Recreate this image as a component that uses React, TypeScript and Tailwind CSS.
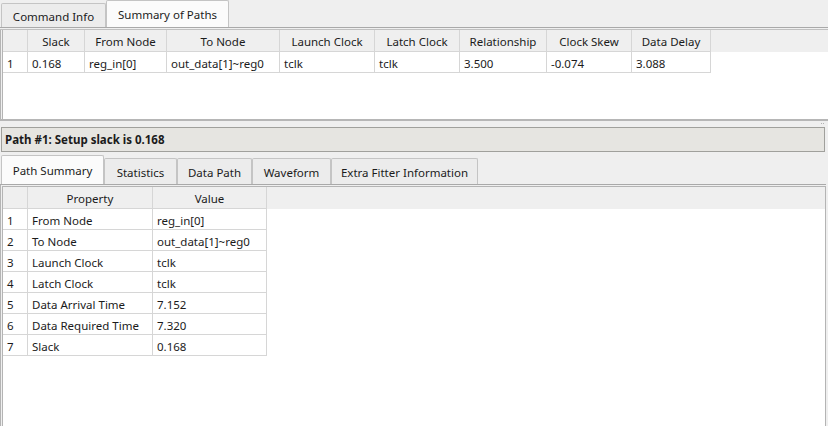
import React from "react";

const topCols = [
  { w: 25, h: "" },
  { w: 57, h: "Slack" },
  { w: 82, h: "From Node" },
  { w: 113, h: "To Node" },
  { w: 95, h: "Launch Clock" },
  { w: 85, h: "Latch Clock" },
  { w: 87, h: "Relationship" },
  { w: 85, h: "Clock Skew" },
  { w: 79, h: "Data Delay" },
];
const topRow = ["1", "0.168", "reg_in[0]", "out_data[1]~reg0", "tclk", "tclk", "3.500", "-0.074", "3.088"];

const botCols = [
  { w: 25, h: "" },
  { w: 125, h: "Property" },
  { w: 114, h: "Value" },
];
const botRows = [
  ["1", "From Node", "reg_in[0]"],
  ["2", "To Node", "out_data[1]~reg0"],
  ["3", "Launch Clock", "tclk"],
  ["4", "Latch Clock", "tclk"],
  ["5", "Data Arrival Time", "7.152"],
  ["6", "Data Required Time", "7.320"],
  ["7", "Slack", "0.168"],
];

function Table({ cols, rows }: { cols: { w: number; h: string }[]; rows: string[][] }) {
  return (
    <div className="flex flex-col">
      <div className="flex h-[22px] bg-[#efefef]">
        {cols.map((c, i) => (
          <div
            key={i}
            style={{ width: c.w }}
            className="flex items-center justify-center pt-[3px] border-r border-b border-[#d6d6d6] shrink-0"
          >
            {c.h}
          </div>
        ))}
      </div>
      {rows.map((r, ri) => (
        <div key={ri} className="flex h-[21px]">
          {r.map((v, i) => (
            <div
              key={i}
              style={{ width: cols[i].w }}
              className="flex items-center pl-[4px] pt-[3px] border-r border-b border-[#d6d6d6] shrink-0 whitespace-nowrap"
            >
              {v}
            </div>
          ))}
        </div>
      ))}
    </div>
  );
}

function Tab({ label, w, sel }: { label: string; w: number; sel?: boolean }) {
  return (
    <div
      style={{ width: w }}
      className={
        sel
          ? "h-full flex items-center justify-center pt-[2px] bg-[#fbfbfb] border border-b-0 border-[#c4c4c4] rounded-t-[2px] shrink-0"
          : "h-[calc(100%-3px)] flex items-center justify-center pt-[2px] bg-[#ececec] border border-b-0 border-[#c4c4c4] rounded-t-[2px] shrink-0"
      }
    >
      {label}
    </div>
  );
}

export default function App() {
  return (
    <div className="w-[828px] h-[426px] bg-[#efefef] overflow-hidden flex flex-col text-[11.5px] text-[#1b1b1b] font-['Noto_Sans',sans-serif] leading-none">
      {/* Top tabs */}
      <div className="h-[28px] flex items-end pl-[1px] border-b border-[#a9a9a9] shrink-0">
        <Tab label="Command Info" w={105} />
        <Tab label="Summary of Paths" w={123} sel />
      </div>
      {/* Top pane */}
      <div className="h-[92px] mt-px border-t border-[#c0c0c0] border-b-2 border-b-[#b6b6b6] flex shrink-0">
        <div className="w-px bg-[#b4b4b4]" />
        <div className="w-px" />
        <div className="flex-1 bg-white border-l border-[#b4b4b4] flex flex-col">
          <div className="relative">
            <div className="absolute inset-x-0 top-0 h-[22px] bg-[#efefef]" />
            <div className="relative">
              <Table cols={topCols} rows={[topRow]} />
            </div>
          </div>
        </div>
      </div>
      {/* Splitter */}
      <div className="h-[6px] relative shrink-0">
        <div className="absolute right-[4px] top-[2px] flex gap-[1px]">
          <div className="w-px h-px bg-[#b0b0b0]" />
          <div className="w-px h-px bg-[#b0b0b0]" />
        </div>
      </div>
      {/* Path bar */}
      <div className="ml-[1px] mr-[3px] h-[25px] bg-[#e6e5e1] border border-[#a0a09c] flex items-center pt-[1px] pl-[3px] font-bold shrink-0">
        Path #1: Setup slack is 0.168
      </div>
      {/* Lower tabs */}
      <div className="h-[29px] mt-[3px] flex items-end pl-[1px] shrink-0">
        <Tab label="Path Summary" w={103} sel />
        <Tab label="Statistics" w={73} />
        <Tab label="Data Path" w={75} />
        <Tab label="Waveform" w={79} />
        <Tab label="Extra Fitter Information" w={147} />
      </div>
      {/* Lower pane */}
      <div className="flex-1 border-t border-[#a9a9a9] mr-[2px] flex">
        <div className="w-px bg-[#b4b4b4]" />
        <div className="w-px" />
        <div className="flex-1 mt-px bg-white border-l border-t border-r border-[#b4b4b4] flex flex-col">
          <div className="relative">
            <div className="absolute inset-x-0 top-0 h-[22px] bg-[#efefef] w-[264px]" />
            <div className="relative">
              <Table cols={botCols} rows={botRows} />
            </div>
          </div>
        </div>
      </div>
    </div>
  );
}
